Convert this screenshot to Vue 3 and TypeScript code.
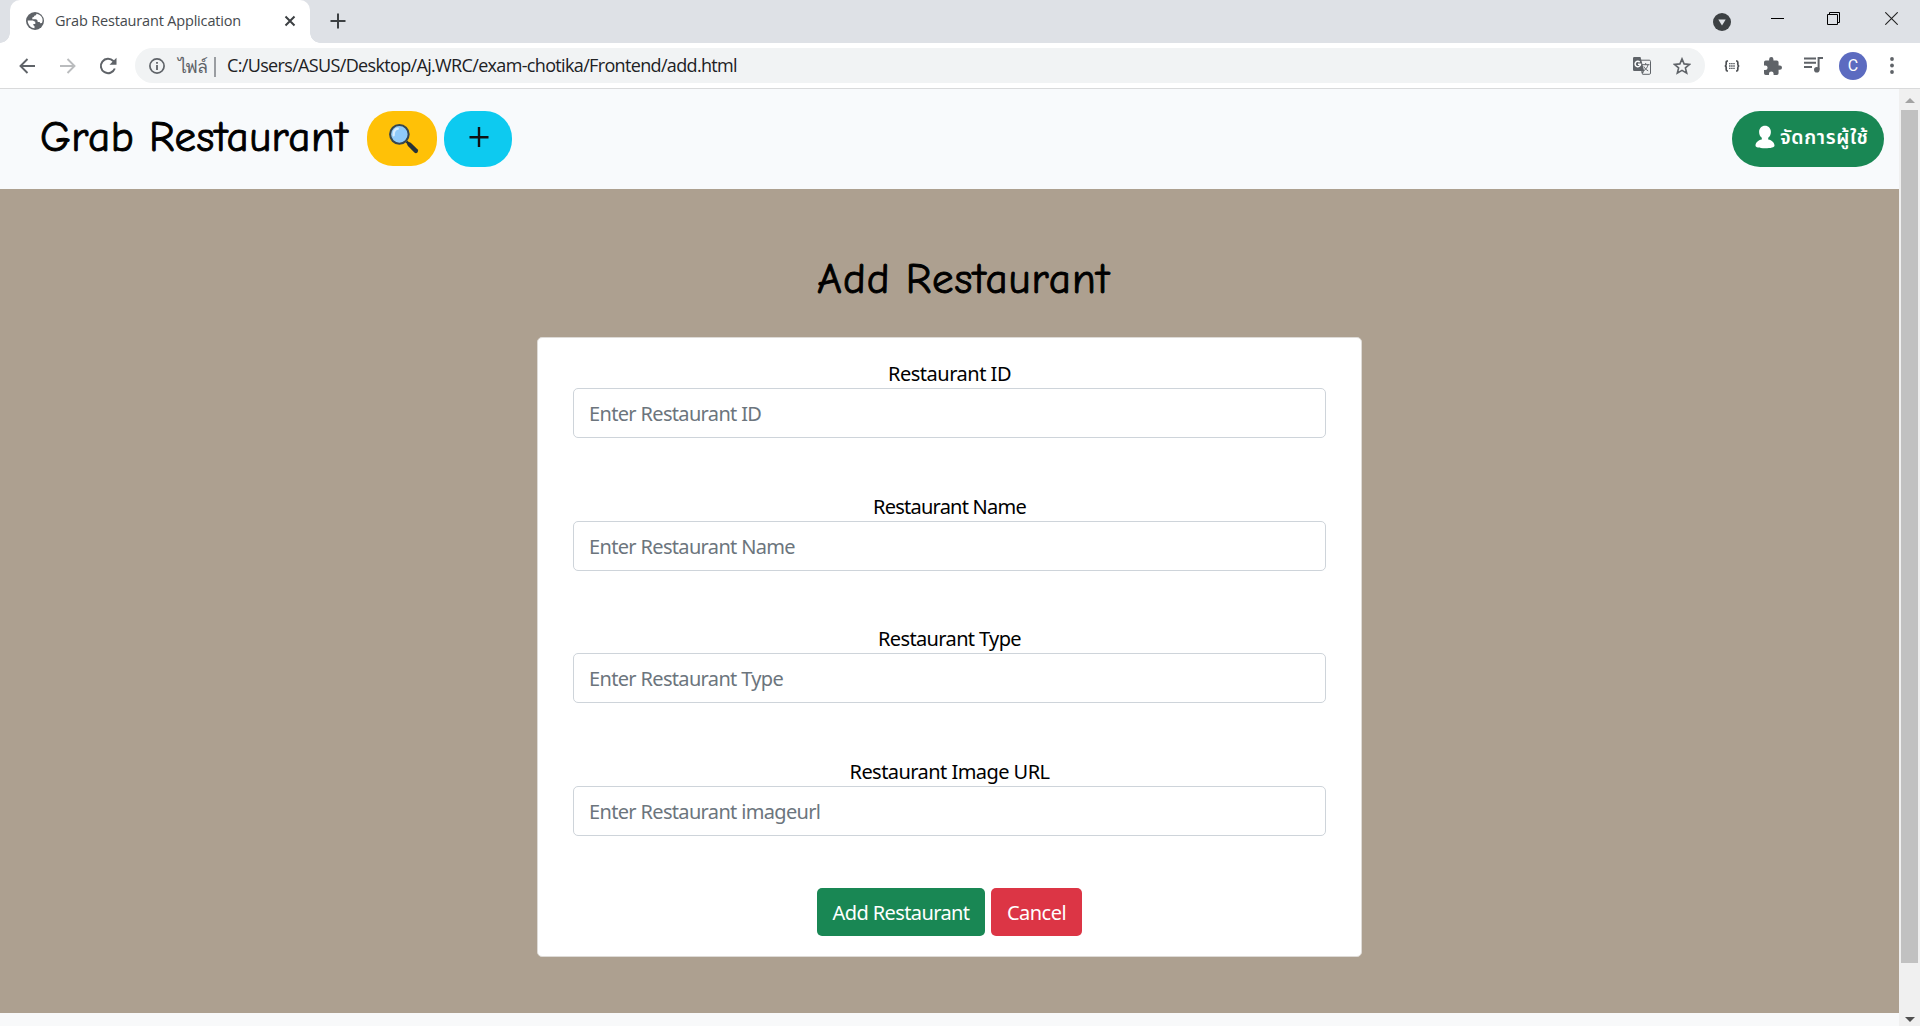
<script setup lang="ts">
interface Field {
  id: string
  label: string
  placeholder: string
  labelWidth: number
}

const fields: Field[] = [
  { id: 'id', label: 'Restaurant ID', placeholder: 'Enter Restaurant ID', labelWidth: 123 },
  { id: 'name', label: 'Restaurant Name', placeholder: 'Enter Restaurant Name', labelWidth: 153 },
  { id: 'type', label: 'Restaurant Type', placeholder: 'Enter Restaurant Type', labelWidth: 143 },
  { id: 'imageurl', label: 'Restaurant Image URL', placeholder: 'Enter Restaurant imageurl', labelWidth: 200 },
]

// Tracks the text so that it fills the given width in pixels
const vFit = {
  mounted(el: HTMLElement, binding: { value: number }) {
    const count = (el.textContent ?? '').length
    const width = el.getBoundingClientRect().width
    el.style.letterSpacing = `${(binding.value - width) / count}px`
  },
}
</script>

<template>
  <div class="browser">
    <header class="tabstrip">
      <div class="tab">
        <svg class="globe" viewBox="0 0 18 18" width="18" height="18">
          <circle cx="9" cy="9" r="9" fill="#5f6368" />
          <path d="M10.5 1.8c-.2 1.3-.8 1.8-2.2 1.9-.2 1.3-.9 1.5-2 1.7v1.9h3.1c1.8 0 2.2 1.2 2.3 2.6h1.9l.6 1.3 1.8-.3c.4-1 .6-1.9.6-2.9 0-2.500-1.700-5.200-6.100-6.200zM1.700 8.500c0 4 2.800 7.400 6.800 7.700v-2.300c-1-.3-1.200-1-1.200-2h2V9.800L6.800 8.500z" fill="#fff" />
        </svg>
        <span class="tab-title"><span v-fit="186">Grab Restaurant Application</span></span>
        <svg class="tab-close" viewBox="0 0 12 12" width="12" height="12"><path d="M1.500 1.500l9 9M10.500 1.500l-9 9" stroke="#3c4043" stroke-width="2" /></svg>
      </div>
      <svg class="new-tab" viewBox="0 0 16 16" width="16" height="16"><path d="M8 .5v15M.5 8h15" stroke="#3c4043" stroke-width="2" /></svg>
      <div class="window-controls">
        <svg class="drop" viewBox="0 0 18 18" width="18" height="18"><circle cx="9" cy="9" r="9" fill="#3c4043" /><path d="M5.300 6.500h7.400L9 12.500z" fill="#dee1e6" /></svg>
        <svg class="min" viewBox="0 0 13 13" width="13" height="13"><path d="M0 6.500h13" stroke="#000" /></svg>
        <svg class="max" viewBox="0 0 13 13" width="13" height="13"><path d="M.5 2.500h10v10H.5zM2.500 2.500V.5h10v10h-2" fill="none" stroke="#000" /></svg>
        <svg class="close" viewBox="0 0 13 13" width="13" height="13"><path d="M.3.3l12.400 12.400M12.700.3L.3 12.700" stroke="#222" stroke-width="1.100" /></svg>
      </div>
    </header>

    <div class="toolbar">
      <svg class="back" viewBox="0 0 16 16" width="16" height="16"><path d="M16 8H1.500M8.500 1L1.500 8l7 7" fill="none" stroke="#5f6368" stroke-width="1.900" /></svg>
      <svg class="forward" viewBox="0 0 16 16" width="16" height="16"><path d="M0 8h14.500M7.500 1l7 7-7 7" fill="none" stroke="#babcbe" stroke-width="1.900" /></svg>
      <svg class="reload" viewBox="0 0 18 18" width="18" height="18"><path d="M15.800 11.500A7.200 7.200 0 1 1 14.300 4L16 5.700" fill="none" stroke="#5f6368" stroke-width="2" /><path d="M17.500.8v7h-7z" fill="#5f6368" /></svg>
      <div class="omnibox">
        <svg class="info" viewBox="0 0 16 16" width="16" height="16"><circle cx="8" cy="8" r="7.100" fill="none" stroke="#5f6368" stroke-width="1.700" /><path d="M8 7v5M8 4v1.800" stroke="#5f6368" stroke-width="1.800" /></svg>
        <span class="scheme"><span v-fit="26">ไฟล์</span></span>
        <i class="divider"></i>
        <span class="url"><span v-fit="510">C:/Users/ASUS/Desktop/Aj.WRC/exam-chotika/Frontend/add.html</span></span>
        <svg class="translate" viewBox="0 0 18 18" width="18" height="18">
          <path d="M6 3.200h10.300a1.200 1.200 0 0 1 1.200 1.200v11.700a1.200 1.200 0 0 1-1.200 1.200H9.500" fill="#f1f3f4" stroke="#5f6368" />
          <path d="M9 7.700h7.500M12.700 6v1.700M15 7.700c-.5 2.800-2.300 5-4.700 6.300M10.800 9.500c1 2 2.500 3.300 4.400 4.300" fill="none" stroke="#5f6368" />
          <path d="M1.200 0h6.300l3.700 14H1.200A1.200 1.200 0 0 1 0 12.800V1.200A1.200 1.200 0 0 1 1.200 0z" fill="#5f6368" />
          <path d="M8 14.200h3.200L9.200 17.500z" fill="#5f6368" />
          <path d="M6.700 5.100A2.700 2.700 0 1 0 7.500 7.200H5" fill="none" stroke="#fff" stroke-width="1.500" />
        </svg>
        <svg class="star" viewBox="0 0 18 18" width="18" height="18"><path d="M9 1.900l2.100 5 5.400.5-4.100 3.500 1.300 5.300L9 13.400l-4.700 2.800 1.300-5.300-4.100-3.500 5.400-.5z" fill="none" stroke="#5f6368" stroke-width="1.600" /></svg>
      </div>
      <svg class="braces" viewBox="0 0 16 12" width="16" height="12"><path d="M4 1H3.300Q2.200 1 2.200 2.500v1.800Q2.200 6 .7 6 2.200 6 2.200 7.700v1.800Q2.200 11 3.300 11H4M12 1h.7q1.100 0 1.100 1.500v1.800Q13.800 6 15.300 6q-1.500 0-1.500 1.700v1.800q0 1.500-1.100 1.500H12" fill="none" stroke="#4b4e52" stroke-width="1.700" /><path d="M5 3.700h6M5 6h6M5 8.300h6" stroke="#5f6368" stroke-width="1.300" stroke-dasharray="1.600 .5" /></svg>
      <svg class="puzzle" viewBox="2 1 21 21" width="18" height="18"><path d="M20.500 11H19V7a2 2 0 0 0-2-2h-4V3.500a2.500 2.500 0 0 0-5 0V5H4a2 2 0 0 0-2 2v3.800h1.500a2.700 2.700 0 0 1 0 5.400H2V20a2 2 0 0 0 2 2h3.800v-1.500a2.700 2.700 0 0 1 5.400 0V22H17a2 2 0 0 0 2-2v-4h1.500a2.500 2.500 0 0 0 0-5z" fill="#5f6368" /></svg>
      <svg class="playlist" viewBox="0 0 20 16" width="20" height="16"><path d="M0 1.500h12M0 5.700h12M0 10h8" stroke="#5f6368" stroke-width="1.900" /><path d="M14.600 12.500V1H19" fill="none" stroke="#5f6368" stroke-width="2" /><circle cx="12.800" cy="12.700" r="2.800" fill="#5f6368" /></svg>
      <span class="avatar">C</span>
      <svg class="dots" viewBox="0 0 4 17" width="4" height="17"><g fill="#5f6368"><circle cx="2" cy="2" r="1.900" /><circle cx="2" cy="8.500" r="1.900" /><circle cx="2" cy="15" r="1.900" /></g></svg>
    </div>

    <div class="viewport">
      <div class="page">
        <nav class="navbar">
          <div class="brand"><span v-fit="308">Grab Restaurant</span></div>
          <button class="pill search">
            <svg viewBox="0 0 30 30" width="31" height="31">
              <path d="M18 18l3.500 3.500" stroke="#263238" stroke-width="2.400" />
              <path d="M20.800 20.800l6.200 6.200" stroke="#263238" stroke-width="4.200" stroke-linecap="round" />
              <circle cx="11" cy="11" r="9" fill="#90caf9" stroke="#37474f" stroke-width="2" />
              <path d="M5.500 12c-.2-3.500 1.300-6 4-6.500" fill="none" stroke="#d8edfd" stroke-width="2.200" stroke-linecap="round" />
            </svg>
          </button>
          <button class="pill plus">
            <svg viewBox="0 0 20 22" width="20" height="22"><path d="M10 1v20M.5 11.200h19" stroke="#111" stroke-width="2.400" /></svg>
          </button>
          <button class="pill users">
            <svg viewBox="0 0 20 24" width="20" height="24"><path d="M10 .8c3.500 0 5.900 2.600 5.900 6.100 0 2.600-1.100 4.600-2.700 5.800v1.900c3.700.8 6.300 2.900 6.300 6.100 0 1.600-3.500 2.500-9.500 2.500S.5 22.300.5 20.700c0-3.200 2.600-5.300 6.300-6.100v-1.900C5.200 11.500 4.100 9.500 4.100 6.900 4.100 3.400 6.500.8 10 .8z" fill="#fff" /></svg>
            <span v-fit="91">จัดการผู้ใช้</span>
          </button>
        </nav>
        <main class="content">
          <h1><span v-fit="293">Add Restaurant</span></h1>
          <form class="card" @submit.prevent>
            <div v-for="field in fields" :key="field.id" class="field">
              <label :for="field.id"><span v-fit="field.labelWidth">{{ field.label }}</span></label>
              <input :id="field.id" type="text" :placeholder="field.placeholder" />
            </div>
            <div class="actions">
              <button class="btn success"><span v-fit="137">Add Restaurant</span></button>
              <button class="btn danger" type="button"><span v-fit="59">Cancel</span></button>
            </div>
          </form>
        </main>
      </div>
      <div class="scrollbar">
        <svg class="arrow" viewBox="0 0 10 5" width="10" height="5"><path d="M0 5L5 0l5 5z" fill="#a3a3a3" /></svg>
        <div class="thumb"></div>
        <svg class="arrow" viewBox="0 0 10 5" width="10" height="5"><path d="M0 0l5 5 5-5z" fill="#505050" /></svg>
      </div>
    </div>
  </div>
</template>

<style>
body {
  margin: 0;
  overflow: hidden;
}
</style>

<style scoped>
* {
  box-sizing: border-box;
}
.browser {
  width: 1920px;
  height: 1026px;
  display: flex;
  flex-direction: column;
  overflow: hidden;
  background: #fff;
  font-family: Tahoma, "Noto Sans", "Noto Sans Thai", "Loma", "DejaVu Sans", sans-serif;
}
svg {
  display: block;
  flex: none;
}
button {
  border: 0;
  padding: 0;
  font: inherit;
}
.tabstrip {
  height: 43px;
  flex: none;
  display: flex;
  background: #dee1e6;
  padding-left: 10px;
}
.tab {
  position: relative;
  width: 300px;
  height: 43px;
  display: flex;
  align-items: center;
  background: #fff;
  border-radius: 10px 10px 0 0;
  padding: 0 14px 1px 16px;
}
.tab::before,
.tab::after {
  content: "";
  position: absolute;
  bottom: 0;
  width: 10px;
  height: 10px;
}
.tab::before {
  left: -10px;
  background: radial-gradient(circle at 0 0, #dee1e6 9.5px, #fff 10px);
}
.tab::after {
  right: -10px;
  background: radial-gradient(circle at 100% 0, #dee1e6 9.5px, #fff 10px);
}
.tab-title {
  flex: 1;
  margin-left: 11px;
  font: 14.5px/20px "Segoe UI", "Open Sans", "Noto Sans", sans-serif;
  color: #45494d;
  white-space: nowrap;
}
.new-tab {
  margin: 13px 0 0 20px;
}
.window-controls {
  margin-left: auto;
  display: flex;
}
.drop {
  margin: 13px 40px 0 0;
}
.min {
  margin: 12px 43px 0 0;
}
.max {
  margin: 12px 45px 0 0;
}
.close {
  margin: 12px 22px 0 0;
}
.toolbar {
  height: 46px;
  flex: none;
  display: flex;
  align-items: center;
  border-bottom: 1px solid #d9dadb;
  padding: 0 26px 0 19px;
}
.forward {
  margin-left: 25px;
}
.reload {
  margin: 0 18px 0 23px;
}
.omnibox {
  width: 1570px;
  height: 35px;
  display: flex;
  align-items: center;
  background: #f1f3f4;
  border-radius: 18px;
  padding: 0 14px;
  font: 18px/26px "Segoe UI", "Open Sans", "Noto Sans", sans-serif;
  color: #202124;
  white-space: nowrap;
}
.scheme {
  width: 28px;
  margin-left: 13px;
  margin-right: 1px;
  color: #5f6368;
  font-size: 18px;
}
.divider {
  width: 2px;
  height: 20px;
  margin: 2px 11px 0 7px;
  background: #9a9da1;
}
.url {
  flex: 1;
  padding-bottom: 2px;
}
.star {
  margin-left: 22px;
}
.braces {
  margin-left: 19px;
}
.puzzle {
  margin-left: 24px;
}
.playlist {
  margin: 0 15px 2px 22px;
}
.avatar {
  width: 28px;
  height: 28px;
  border-radius: 50%;
  background: #5c6bc0;
  color: #fff;
  font: 16px/28px Roboto, sans-serif;
  text-align: center;
}
.dots {
  margin-left: auto;
  margin-right: 0;
}
.viewport {
  flex: 1;
  display: flex;
  min-height: 0;
}
.page {
  flex: 1;
  background: #f8f9fa;
}
.navbar {
  height: 100px;
  display: flex;
  align-items: flex-start;
  background: #f8fafc;
  padding: 22px 15px 0 40px;
}
.brand,
h1 {
  font-family: "Comic Sans MS", "Comic Neue", "Comic Relief", "Noto Sans", cursive;
  font-weight: 400;
  color: #000;
  -webkit-text-stroke: 0.9px #000;
  white-space: nowrap;
}
.brand {
  flex: none;
  width: 327px;
  font-size: 43px;
  line-height: 52px;
}
.pill {
  flex: none;
  height: 56px;
  border-radius: 28px;
  display: flex;
  justify-content: center;
}
.search {
  width: 70px;
  height: 55px;
  border-radius: 26px;
  padding-top: 12px;
  padding-left: 2px;
  background: #ffc107;
}
.plus {
  width: 68px;
  border-radius: 27px;
  margin-left: 7px;
  padding-top: 15px;
  padding-left: 2px;
  background: #0dcaf0;
}
.users {
  width: 152px;
  margin-left: auto;
  justify-content: flex-start;
  gap: 5px;
  padding: 14px 0 0 23px;
  background: #198754;
  color: #fff;
  font-size: 19.5px;
  line-height: 24px;
  font-weight: 600;
  white-space: nowrap;
}
.content {
  height: 824px;
  background: #ada090;
  padding: 64px 0 0 537px;
}
h1 {
  margin: 0 0 32px;
  padding-left: 280px;
  font-size: 43px;
  line-height: 52px;
}
.card {
  width: 825px;
  height: 620px;
  background: #fff;
  border: 1px solid #dedbd7;
  border-radius: 5px;
  padding: 20px 35px 0;
}
.field {
  height: 132.67px;
}
.field label {
  display: block;
  height: 30px;
  font-size: 20px;
  line-height: 32px;
  text-align: center;
  color: #000;
  white-space: nowrap;
}
.field input {
  display: block;
  width: 753px;
  height: 50px;
  border: 1px solid #ced4da;
  border-radius: 5px;
  padding: 1px 15px 0;
  font: inherit;
  font-size: 20px;
  letter-spacing: -0.66px;
  outline: none;
}
.field input::placeholder {
  color: #6c757d;
  opacity: 1;
}
.actions {
  display: flex;
  justify-content: center;
  gap: 6px;
  margin-top: -1px;
}
.btn {
  height: 48px;
  border-radius: 5px;
  padding-top: 1px;
  color: #fff;
  font-size: 20px;
  line-height: 47px;
  white-space: nowrap;
}
.success {
  width: 168px;
  background: #198754;
}
.danger {
  width: 91px;
  background: #dc3545;
}
.scrollbar {
  width: 21px;
  display: flex;
  flex-direction: column;
  align-items: center;
  background: #f0f0f0;
  padding: 9px 0 4px;
}
.thumb {
  width: 17px;
  height: 853px;
  margin: 7px 0 auto;
  background: #c1c1c1;
}
</style>
